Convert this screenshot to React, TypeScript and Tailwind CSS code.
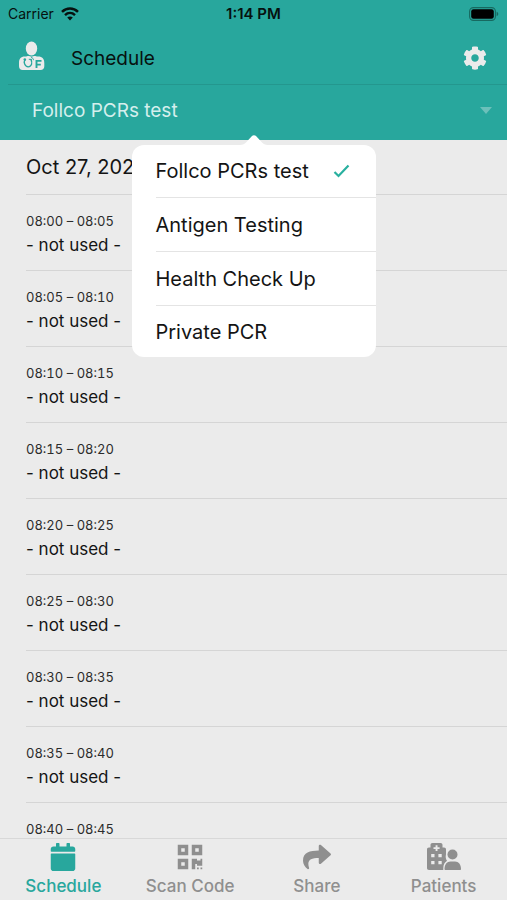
import { useState } from "react";
import { FaCalendar, FaCog, FaQrcode, FaShare } from "react-icons/fa";

const services = ["Follco PCRs test", "Antigen Testing", "Health Check Up", "Private PCR"];

const slots = [
  "08:00 – 08:05",
  "08:05 – 08:10",
  "08:10 – 08:15",
  "08:15 – 08:20",
  "08:20 – 08:25",
  "08:25 – 08:30",
  "08:30 – 08:35",
  "08:35 – 08:40",
  "08:40 – 08:45",
];

function HospitalIcon() {
  return (
    <svg viewBox="0 0 34 28" className="h-7 w-[34px]" fill="currentColor" aria-hidden="true">
      <path
        fillRule="evenodd"
        d="M3.500 4.500V2c0-1.300.7-2 2-2h8c1.300 0 2 .7 2 2v2.500H17c1.300 0 2 .7 2 2v4.700c-.7 2.600-.2 4.900 1 6.500-2.500 1.600-3.700 4.300-3.700 7.300v2H2c-1.300 0-2-.7-2-2V6.500c0-1.300.7-2 2-2ZM8.600 2.200v2H6.500v1.900h2.100v2h1.900v-2h2.100V4.200h-2.100v-2ZM4.200 11v3.200h3.300V11Zm7.200 0v3.200h3.300V11Zm-7.200 7v3.200h3.300V18Zm7.200 0v3.200h3.300V18Z"
      />
      <circle cx="25.500" cy="11.500" r="5" />
      <path d="M17.500 26c0-4.500 2.400-7.500 6-7.500h4.500c3.600 0 6 3 6 7.500 0 .7-.4 1-1 1H18.500c-.6 0-1-.3-1-1Z" />
    </svg>
  );
}

const tabs = [
  { label: "Schedule", icon: <FaCalendar size={28} /> },
  { label: "Scan Code", icon: <FaQrcode size={28} /> },
  { label: "Share", icon: <FaShare size={28} /> },
  { label: "Patients", icon: <HospitalIcon /> },
];

function WifiIcon() {
  return (
    <svg viewBox="0 0 18 14" className="h-[14px] w-[18px]" fill="none" stroke="#06110f" aria-hidden="true">
      <path d="M1 4.900C5.600.4 12.400.4 17 4.900" strokeWidth="2.500" />
      <path d="M4 8.100c2.900-2.800 7.100-2.800 10 0" strokeWidth="2.400" />
      <path d="M9 13.400 6.200 10.600c1.600-1.500 4-1.500 5.600 0Z" fill="#06110f" stroke="none" />
    </svg>
  );
}

function BatteryIcon() {
  return (
    <svg viewBox="0 0 30 14" className="h-[14px] w-[30px]" aria-hidden="true">
      <rect x="0.6" y="0.6" width="25.800" height="12.800" rx="3.800" fill="none" stroke="#176960" strokeWidth="1.100" />
      <rect x="2.200" y="2.200" width="22.600" height="9.600" rx="2.300" fill="#000" />
      <path d="M27.600 4.800c2.200.7 2.200 3.700 0 4.400Z" fill="#176960" />
    </svg>
  );
}

function DoctorLogo() {
  return (
    <svg viewBox="0 0 26 30" className="h-[30px] w-[26px]" aria-hidden="true">
      <ellipse cx="12.500" cy="7.500" rx="5.700" ry="7" fill="#ebebeb" />
      <path
        d="M6 15.600c1.600 0 2.400-.5 3.400-.5.900 0 1.700.5 3.100.5s2.200-.5 3.100-.5c1 0 1.800.5 3.400.5 4.500 0 6.300 2.600 6.300 6.400v3.200c0 2.400-1.400 3.800-3.800 3.800h-18C1.400 29 0 27.600 0 25.200V22c0-3.800 1.500-6.400 6-6.400Z"
        fill="#ebebeb"
      />
      <path d="M6.200 18.600c-2 2.400-.5 7.200 3 7.200 3.700 0 4.500-4.500 2.600-7.600" fill="none" stroke="#28a79d" strokeWidth="1.300" />
      <circle cx="5.800" cy="18.600" r="1.300" fill="#28a79d" />
      <path d="M9.800 18.300h2.600v2.600M12 16c1.600.8 2.400 1.700 2.500 3.200" fill="none" stroke="#28a79d" strokeWidth="1" />
      <path d="M17.500 27v-7.100h5M17.500 23.600h4.300" fill="none" stroke="#28a79d" strokeWidth="1.900" />
    </svg>
  );
}

export default function App() {
  const [service, setService] = useState(services[0]);
  const [tab, setTab] = useState("Schedule");

  return (
    <div className="flex h-screen flex-col overflow-hidden bg-[#ebebeb] font-['Inter','Liberation_Sans',sans-serif] text-[#141414]">
      <header className="relative shrink-0 bg-[#28a79d]">
        <div className="grid h-7 grid-cols-3 items-center px-2 text-[#06110f]">
          <div className="flex items-center gap-[7px] text-sm">
            <span>Carrier</span>
            <WifiIcon />
          </div>
          <span className="text-center text-[15px] leading-5 font-semibold">1:14 PM</span>
          <span className="justify-self-end">
            <BatteryIcon />
          </span>
        </div>
        <div className="flex h-14 items-center pr-5 pl-[19px]">
          <DoctorLogo />
          <h1 className="ml-[26px] flex-1 pt-[6px] text-[19px] leading-6 text-[#07110f]">Schedule</h1>
          <button type="button" aria-label="Settings" className="pt-1 text-[#ebebeb]">
            <FaCog size={24} />
          </button>
        </div>
        <div className="ml-2 h-px bg-[#24978e]" />
        <div className="flex h-[55px] items-center pr-[15px] pl-8">
          <select
            aria-label="Service"
            value={service}
            onChange={(event) => setService(event.target.value)}
            className="h-full flex-1 appearance-none bg-transparent pb-[3px] text-[19px] text-[#d5efed] outline-none"
          >
            {services.map((name) => (
              <option key={name}>{name}</option>
            ))}
          </select>
          <svg viewBox="0 0 12 7" className="mb-1 h-[7px] w-3" aria-hidden="true">
            <path d="M0 0h12L6 7Z" fill="#6cc0ba" />
          </svg>
        </div>

        <div className="absolute top-[145px] left-1/2 z-10 w-[244px] -translate-x-1/2 rounded-xl bg-white">
          <svg viewBox="0 0 28 10" className="absolute bottom-full left-1/2 h-[10px] w-7 -translate-x-1/2" aria-hidden="true">
            <path d="M0 10c3 0 4.500-1 6-2.500l5.500-6c1.600-1.800 3.400-1.800 5 0l5.500 6c1.500 1.500 3 2.500 6 2.500Z" fill="#fff" />
          </svg>
          <ul>
            {services.map((name) => (
              <li key={name} className="group pl-6">
                <button
                  type="button"
                  aria-pressed={name === service}
                  onClick={() => setService(name)}
                  className="flex h-[54px] w-full items-center justify-between border-b border-[#e4e4e4] pr-[26px] text-left text-xl group-first:h-[53px] group-last:h-[51px] group-last:border-b-0"
                >
                  {name}
                  {name === service && (
                    <svg viewBox="0 0 17 14" className="h-[14px] w-[17px]" fill="none" stroke="#28b09f" strokeWidth="2.200" aria-hidden="true">
                      <path d="m1.500 8 4 4L15.500 1.500" />
                    </svg>
                  )}
                </button>
              </li>
            ))}
          </ul>
        </div>
      </header>

      <main className="min-h-0 flex-1 overflow-y-auto pl-[26px] [scrollbar-width:none]">
        <h2 className="flex h-[55px] items-center border-b border-[#d5d5d5] text-xl">Oct 27, 2021</h2>
        <ul>
          {slots.map((time) => (
            <li key={time} className="h-[76px] border-b border-[#d5d5d5] pt-4">
              <p className="text-[13px] leading-5 text-[#2b2b2b] tabular-nums">{time}</p>
              <p className="mt-[2px] text-[17px] leading-6">- not used -</p>
            </li>
          ))}
        </ul>
      </main>

      <nav className="grid h-[62px] shrink-0 grid-cols-4 border-t border-[#d8d8d8]">
        {tabs.map(({ label, icon }) => (
          <button
            key={label}
            type="button"
            aria-current={label === tab ? "page" : undefined}
            onClick={() => setTab(label)}
            className="flex flex-col items-center gap-[3px] pt-1 text-[17px] leading-6 font-medium text-[#8f8f8f] aria-[current=page]:text-[#28a79d]"
          >
            {icon}
            {label}
          </button>
        ))}
      </nav>
    </div>
  );
}
